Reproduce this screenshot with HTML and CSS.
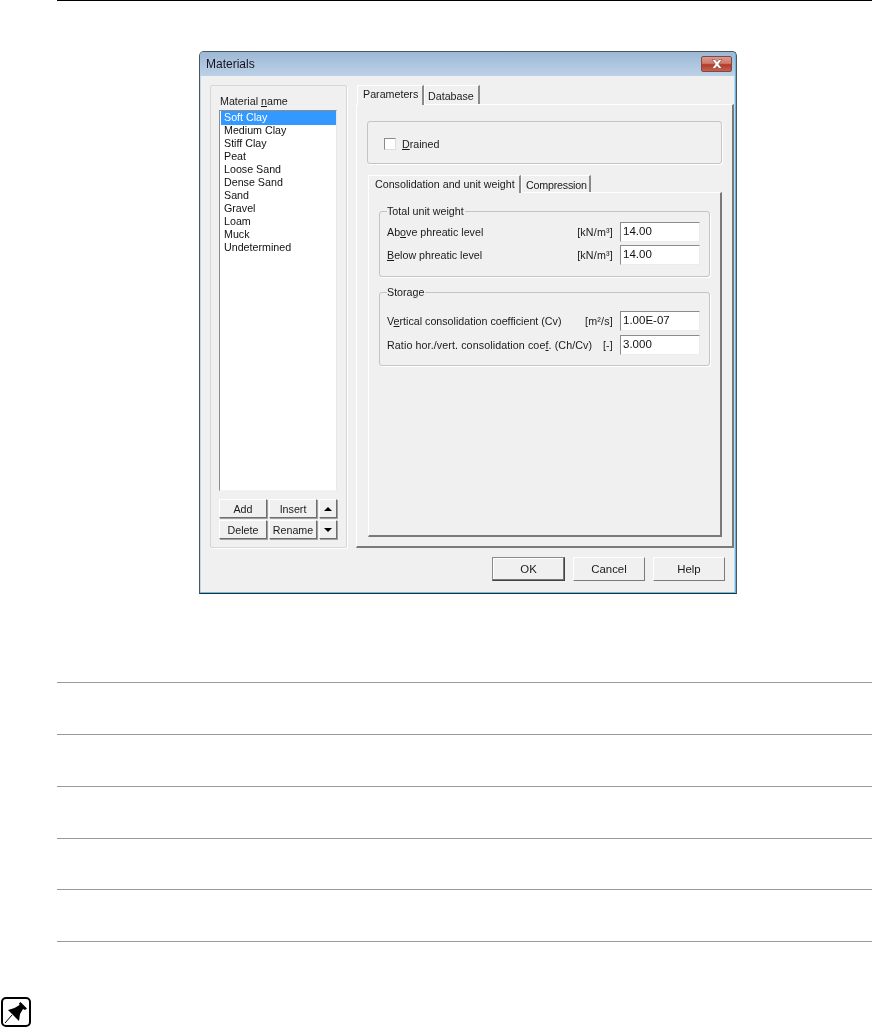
FILE: index.html
```html
<!DOCTYPE html>
<html lang="en">
<head>
<meta charset="utf-8">
<title>Materials</title>
<link rel="stylesheet" href="styles.css">
</head>
<body>
<main class="page">
  <div class="top-rule"></div>
  <section class="dialog">
    <header class="titlebar">
      <span class="title">Materials</span>
      <span class="close"><svg width="14" height="10" viewBox="0 0 14 10"><path d="M2 0.5h3l2 2.3 2-2.3h3L8.700 5 12 9.500H9L7 7.200 5 9.500H2L5.300 5z" fill="#fff" stroke="#8a3a30" stroke-width=".6"/></svg></span>
    </header>
    <div class="client">
      <div class="main">
        <aside class="materials">
          <div class="mat-label">Material <u>n</u>ame</div>
          <ul class="list">
            <li class="selected">Soft Clay</li>
            <li>Medium Clay</li>
            <li>Stiff Clay</li>
            <li>Peat</li>
            <li>Loose Sand</li>
            <li>Dense Sand</li>
            <li>Sand</li>
            <li>Gravel</li>
            <li>Loam</li>
            <li>Muck</li>
            <li>Undetermined</li>
          </ul>
          <div class="list-buttons">
            <button class="btn">Add</button>
            <button class="btn">Insert</button>
            <button class="btn arrow"><span class="tri-up"></span></button>
            <button class="btn">Delete</button>
            <button class="btn">Rename</button>
            <button class="btn arrow"><span class="tri-down"></span></button>
          </div>
        </aside>
        <div class="right">
          <div class="tabs">
            <span class="tab active tab-params">Parameters</span>
            <span class="tab tab-db">Database</span>
          </div>
          <div class="panel">
            <div class="drained-box">
              <span class="check"></span>
              <span class="drained-text"><u>D</u>rained</span>
            </div>
            <div class="tabs sub">
              <span class="tab active tab-cons">Consolidation and unit weight</span>
              <span class="tab tab-comp">Compression</span>
            </div>
            <div class="subpanel">
              <div class="group total">
                <span class="legend">Total unit weight</span>
                <div class="field"><span class="lbl">Ab<u>o</u>ve phreatic level</span><span class="unit">[kN/m³]</span><span class="input">14.00</span></div>
                <div class="field"><span class="lbl"><u>B</u>elow phreatic level</span><span class="unit">[kN/m³]</span><span class="input">14.00</span></div>
              </div>
              <div class="group storage">
                <span class="legend">Storage</span>
                <div class="field"><span class="lbl">V<u>e</u>rtical consolidation coefficient (Cv)</span><span class="unit">[m²/s]</span><span class="input">1.00E-07</span></div>
                <div class="field"><span class="lbl wide">Ratio hor./vert. consolidation coe<u>f</u>. (Ch/Cv)</span><span class="unit">[-]</span><span class="input">3.000</span></div>
              </div>
            </div>
          </div>
        </div>
      </div>
      <footer class="footer">
        <button class="btn big default">OK</button>
        <button class="btn big">Cancel</button>
        <button class="btn big">Help</button>
      </footer>
    </div>
  </section>
  <div class="rows">
    <div class="row"></div>
    <div class="row"></div>
    <div class="row"></div>
    <div class="row"></div>
    <div class="row"></div>
    <div class="row last"></div>
  </div>
  <div class="note">
    <svg width="30" height="30" viewBox="0 0 30 30">
      <rect x="1" y="1" width="28" height="28" rx="4" fill="#fff" stroke="#000" stroke-width="2"/>
      <path d="M4 26l7-8" stroke="#000" stroke-width="1" fill="none"/>
      <path d="M19.500 5L26 11.500l-2 1.500-2-1-3 5-1 7L7 13l6.500-2 5-3-.5-1.500z" fill="#000"/>
    </svg>
  </div>
</main>
</body>
</html>
```
FILE: styles.css
```css
* { box-sizing: border-box; }
html, body { margin: 0; height: 1028px; overflow: hidden; background: #fff; }
body { font-family: "Liberation Sans", Arial, sans-serif; font-size: 10.7px; color: #1a1a1a; }
.page { width: 879px; height: 1028px; }
.top-rule { margin-left: 57px; width: 815px; height: 1px; background: #000; }

.dialog {
  margin: 50px 0 0 199px;
  width: 538px;
  height: 543px;
  border: 1px solid #4a5660;
  border-bottom: 1px solid #1f2e38;
  border-radius: 5px 5px 0 0;
  background: #c4d6ea;
  padding: 0 2px 0 1px;
  box-shadow: inset -1px 0 0 #5fb6e0, inset 0 -1px 0 #6fc0e4;
  filter: blur(.3px);
}
.titlebar {
  height: 24px;
  margin: 0 -1px 0 -1px;
  padding: 0 3px 0 6px;
  display: flex;
  align-items: center;
  justify-content: space-between;
  background: linear-gradient(#9db8d5, #bcd1e7);
  border-radius: 4px 4px 0 0;
}
.title { font-size: 12px; color: #1a1020; }
.close {
  width: 31px;
  height: 16px;
  margin-top: -1px;
  display: flex;
  align-items: center;
  justify-content: center;
  border: 1px solid #7c4a45;
  border-radius: 2px;
  background: linear-gradient(#dc9a8e 0, #cf7a6c 45%, #b23a2a 55%, #c8604e 100%);
}
.client {
  height: 516px;
  background: #f0f0f0;
  padding: 9px 9px 0 9px;
}
.main { display: flex; gap: 9px; height: 463px; }

.materials {
  width: 137px;
  padding: 9px 9px 0 8px;
  border: 1px solid #d6d6d6;
  border-radius: 2px;
  box-shadow: 1px 1px 0 #fff;
}
.mat-label { height: 15px; padding-left: 1px; line-height: 13px; }
.list {
  list-style: none;
  margin: 0;
  padding: 0 0 0 1px;
  width: 118px;
  height: 381px;
  background: #fff;
  border: 1px solid;
  border-color: #8c8c8c #e8e8e8 #f4f4f4 #8c8c8c;
  color: #111;
}
.list li { height: 13px; line-height: 13px; padding-left: 3px; }
.list .selected { height: 14px; margin-bottom: -1px; background: #3399ff; color: #fff; }
.list-buttons {
  margin-top: 8px;
  display: grid;
  grid-template-columns: 49px 49px 19px;
  grid-auto-rows: 20px;
  column-gap: 1px;
  row-gap: 1px;
}
.btn {
  font: 10.7px "Liberation Sans", Arial, sans-serif;
  color: #1a1a1a;
  background: #f0f0f0;
  padding: 0;
  border: 1px solid;
  border-color: #fff #6e6e6e #6e6e6e #fff;
  box-shadow: 1px 1px 0 #a0a0a0;
  display: flex;
  align-items: center;
  justify-content: center;
}
.list-buttons .btn { width: calc(100% - 1px); height: 19px; }
.tri-up, .tri-down { width: 0; height: 0; border-left: 4px solid transparent; border-right: 4px solid transparent; }
.tri-up { border-bottom: 4px solid #000; }
.tri-down { border-top: 4px solid #000; }

.right { width: 378px; display: flex; flex-direction: column; }
.tabs { display: flex; height: 19px; padding-left: 1px; }
.tab {
  position: relative;
  height: 19px;
  padding: 4px 4px 0 3px;
  line-height: 12px;
  white-space: nowrap;
  border-right: 2px solid #8a8a8a;
  border-top: 1px solid #fff;
  border-left: 1px solid #fff;
}
.tab.active {
  padding: 1px 4px 0 5px;
  height: 20px;
  z-index: 1;
  background: #f0f0f0;
  line-height: 15px;
}
.tab-params { width: 67px; }
.tab-db { width: 56px; }
.panel {
  flex: 1;
  padding: 16px 10px 0 10px;
  border: 1px solid;
  border-color: #fff #7a7a7a #7a7a7a #fff;
  border-width: 1px 2px 2px 1px;
}
.drained-box {
  height: 43px;
  display: flex;
  align-items: center;
  gap: 6px;
  padding: 2px 0 0 16px;
  border: 1px solid #c4c4c4;
  border-radius: 3px;
  box-shadow: 1px 1px 0 #fff;
}
.check {
  width: 12px;
  height: 12px;
  background: #fff;
  border: 1px solid;
  border-color: #8a8a8a #ddd #ddd #8a8a8a;
}
.tabs.sub { margin-top: 11px; height: 17px; }
.tabs.sub .tab { height: 17px; padding: 3px 3px 0 4px; }
.tabs.sub .tab.active { height: 18px; padding: 0 3px 0 6px; line-height: 16px; }
.tab-cons { width: 153px; }
.tab-comp { width: 70px; letter-spacing: -.2px; }
.subpanel {
  height: 345px;
  width: 354px;
  margin-left: 1px;
  padding: 18px 10px 0 10px;
  border: 1px solid;
  border-color: #fff #7a7a7a #7a7a7a #fff;
  border-width: 1px 2px 2px 1px;
}
.group {
  position: relative;
  width: 331px;
  padding: 10px 9px 0 7px;
  border: 1px solid #c4c4c4;
  border-radius: 3px;
  box-shadow: 1px 1px 0 #fff;
  display: flex;
  flex-direction: column;
  gap: 4px;
}
.total { height: 66px; gap: 3px; }
.storage { height: 74px; margin-top: 15px; padding-top: 18px; }
.legend {
  position: absolute;
  left: 7px;
  top: -7px;
  padding: 0 1px 0 0;
  line-height: 13px;
  background: #f0f0f0;
}
.field { display: flex; align-items: center; height: 20px; }
.lbl { flex: 1; white-space: nowrap; }
.lbl.wide { letter-spacing: .1px; }
.unit { margin-right: 7px; letter-spacing: .2px; }
.input {
  width: 80px;
  height: 20px;
  padding: 0 0 0 2px;
  line-height: 16px;
  font-size: 11.5px;
  background: #fff;
  color: #111;
  border: 1px solid;
  border-color: #8c8c8c #ececec #ececec #8c8c8c;
}

.footer { display: flex; justify-content: flex-end; gap: 8px; margin-top: 9px; }
.btn.big { width: 72px; height: 24px; font-size: 11.4px; border-color: #fff #7a7a7a #7a7a7a #fff; box-shadow: none; }
.btn.default { width: 73px; border: 1px solid; border-color: #8a8a8a #444 #444 #8a8a8a; box-shadow: inset -1px -1px 0 #777, inset 1px 1px 0 #fff; }

.rows { margin: 88.2px 0 0 57px; width: 815px; }
.row { height: 51.8px; border-top: 1px solid #9a9a9a; }
.row.last { height: 1px; }
.note { margin-top: 55px; padding-left: 1px; line-height: 0; }
```
